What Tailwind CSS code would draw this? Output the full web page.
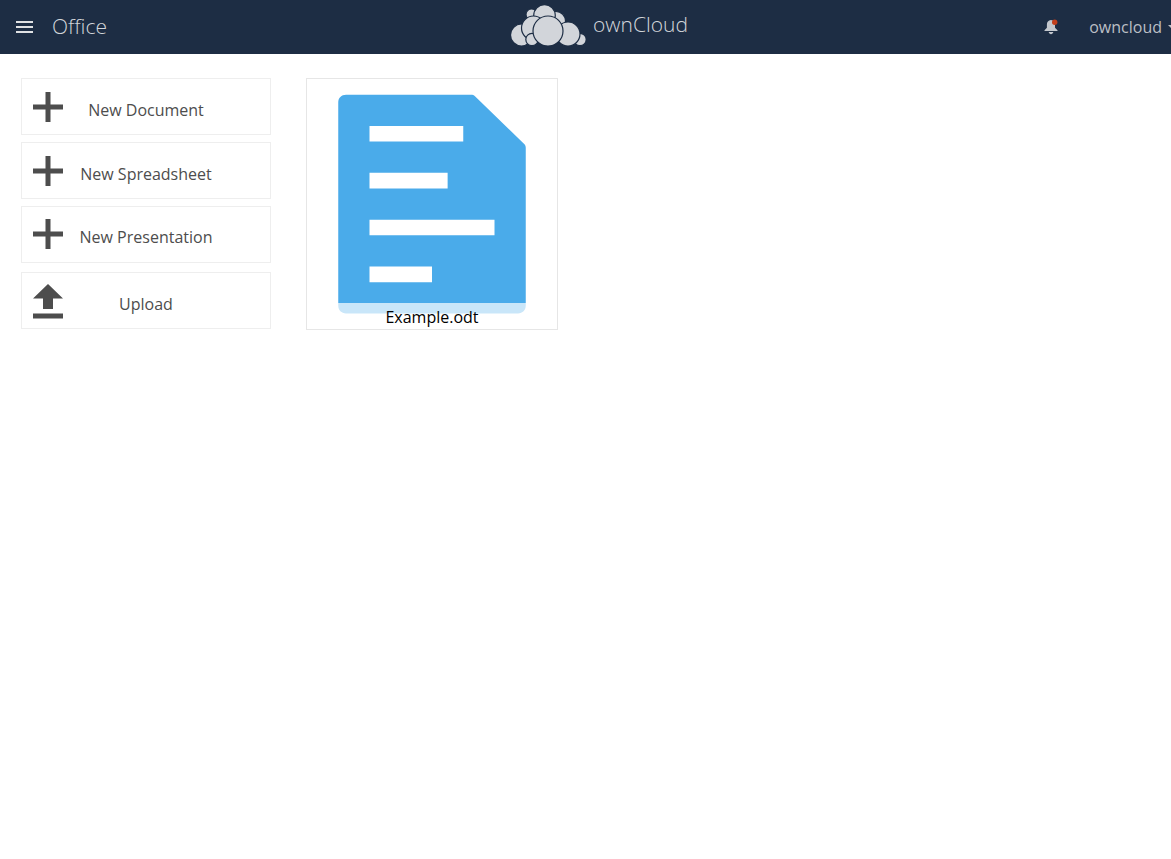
<!DOCTYPE html>
<html lang="en">
<head>
<meta charset="utf-8">
<meta name="viewport" content="width=device-width, initial-scale=1">
<title>Office - ownCloud</title>
<script src="https://cdn.jsdelivr.net/npm/@tailwindcss/browser@4"></script>
</head>
<body class="min-h-screen bg-white font-['Open_Sans',sans-serif] text-base">
<header class="grid h-[54px] grid-cols-[1fr_auto_1fr] items-center overflow-hidden bg-[#1d2d44] text-[#d2d5da]">
  <div class="flex items-center pl-4">
    <button type="button" class="flex items-center gap-[19px]" aria-label="Open app menu: Office">
      <svg class="h-[12px] w-[17px]" viewBox="0 0 17 12" fill="#dfe1e4" shape-rendering="crispEdges" aria-hidden="true"><path d="M0 0h17v2H0zM0 5h17v2H0zM0 10h17v2H0z"/></svg>
      <span class="pb-0.5 text-[21px] leading-7 font-light">Office</span>
    </button>
  </div>
  <a href="#" class="flex items-start gap-[7px] pb-1 pl-7">
    <!-- Cloud built from overlapping circles, back to front -->
    <svg class="h-[43px] w-[75px]" viewBox="0 0 75 43" fill="#d2d5da" stroke="#1d2d44" stroke-width="1.2" aria-hidden="true">
      <circle cx="20.500" cy="10.500" r="5.500"/>
      <circle cx="45" cy="17" r="9.500"/>
      <circle cx="10.500" cy="31" r="11"/>
      <circle cx="69" cy="35.500" r="6.200"/>
      <circle cx="57" cy="30" r="12"/>
      <circle cx="33.500" cy="11.500" r="10.800"/>
      <circle cx="22.500" cy="24" r="12"/>
      <circle cx="21" cy="35.500" r="6.200"/>
      <circle cx="37" cy="27" r="15"/>
    </svg>
    <span class="pt-1.5 text-[21px] leading-7 font-light">ownCloud</span>
  </a>
  <div class="-mr-[5px] flex items-center justify-end gap-[31px]">
    <button type="button" aria-label="Notifications">
      <svg class="h-4 w-[14px]" viewBox="0 0 14 16" fill="#c3c7cd" aria-hidden="true">
        <path d="M7 1C4.200 1 2.900 3.200 2.900 5.500v3.300L0.500 11.300V12h13v-.700L11 8.800V5.500C11 3.200 9.800 1 7 1z"/>
        <path d="M4.700 13h4.600c-.3 1.400-1.200 2.200-2.300 2.200S5 14.400 4.700 13z"/>
        <circle cx="10.700" cy="3.300" r="2.700" fill="#c23f1c"/>
      </svg>
    </button>
    <button type="button" class="flex items-center gap-1.5 text-[#bbbfc5]">owncloud
      <svg class="h-1 w-2" viewBox="0 0 8 4" fill="currentColor" aria-hidden="true"><path d="M0 0h8L4 4z"/></svg>
    </button>
  </div>
</header>
<main class="flex flex-wrap items-start gap-[35px] px-[21px] pt-6">
  <nav class="flex w-[250px] flex-col gap-[7px] text-[#4d4d4d]" aria-label="Create">
    <button type="button" class="relative h-[57px] border border-[#eee] pt-1.5">
      <svg class="absolute top-[13px] left-[11px] size-[30px]" viewBox="0 0 30 30" fill="#4d4d4d" aria-hidden="true"><path d="M12.500 0h5v12.500H30v5H17.500V30h-5V17.500H0v-5h12.500z"/></svg>
      New Document
    </button>
    <button type="button" class="relative h-[57px] border border-[#eee] pt-1.5">
      <svg class="absolute top-[13px] left-[11px] size-[30px]" viewBox="0 0 30 30" fill="#4d4d4d" aria-hidden="true"><path d="M12.500 0h5v12.500H30v5H17.500V30h-5V17.500H0v-5h12.500z"/></svg>
      New Spreadsheet
    </button>
    <button type="button" class="relative h-[57px] border border-[#eee] pt-1">
      <svg class="absolute top-[12px] left-[11px] size-[30px]" viewBox="0 0 30 30" fill="#4d4d4d" aria-hidden="true"><path d="M12.500 0h5v12.500H30v5H17.500V30h-5V17.500H0v-5h12.500z"/></svg>
      New Presentation
    </button>
    <button type="button" class="relative mt-0.5 h-[57px] border border-[#eee] pt-1.5">
      <svg class="absolute top-[11px] left-[11px] h-[35px] w-[30px]" viewBox="0 0 30 35" fill="#4d4d4d" aria-hidden="true"><path d="M15 0l15 14.500H20V25H10V14.500H0zM0 29.500h30v5H0z"/></svg>
      Upload
    </button>
  </nav>
  <a href="#" class="relative block size-[252px] border border-[#e6e6e6] text-black">
    <svg class="block size-full" viewBox="0 0 16 16" aria-hidden="true">
      <path fill="#4aabea" d="M2.500 1C2.200 1 2 1.200 2 1.500v13c0 .3.200.5.500.5h11c.3 0 .5-.200.500-.500V4.400c0-.1-.03-.17-.1-.24L10.750 1.100C10.680 1.030 10.600 1 10.500 1z"/>
      <path fill="#fff" d="M4 3h6v1H4zM4 6h5v1H4zM4 9h8v1H4zM4 12h4v1H4z"/>
    </svg>
    <span class="absolute inset-x-0 bottom-0 bg-white/70 pt-0.5 text-center leading-6">Example.odt</span>
  </a>
</main>
</body>
</html>
